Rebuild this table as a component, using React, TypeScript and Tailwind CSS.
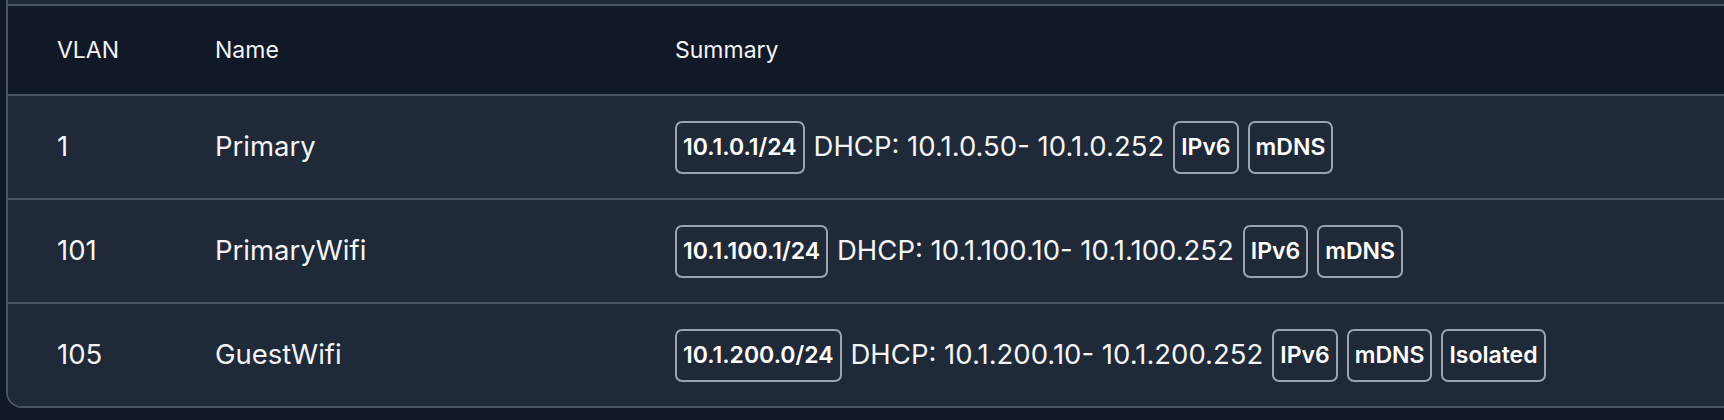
import React from "react";

type Row = { vlan: string; name: string; cidr: string; dhcp: string; tags: string[] };

const rows: Row[] = [
  { vlan: "1", name: "Primary", cidr: "10.1.0.1/24", dhcp: "DHCP: 10.1.0.50- 10.1.0.252", tags: ["IPv6", "mDNS"] },
  { vlan: "101", name: "PrimaryWifi", cidr: "10.1.100.1/24", dhcp: "DHCP: 10.1.100.10- 10.1.100.252", tags: ["IPv6", "mDNS"] },
  { vlan: "105", name: "GuestWifi", cidr: "10.1.200.0/24", dhcp: "DHCP: 10.1.200.10- 10.1.200.252", tags: ["IPv6", "mDNS", "Isolated"] },
];

function Badge({ children }: { children: React.ReactNode }) {
  return (
    <span className="inline-flex h-[53px] items-center rounded-[7px] border-2 border-[#9ca3af] px-[6px] text-[23px] font-semibold text-white">
      {children}
    </span>
  );
}

export default function App() {
  return (
    <div
      className="h-[420px] w-[1724px] overflow-hidden bg-[#111827] pl-[6px] text-[#f3f4f6]"
      style={{ fontFamily: "Inter, 'Noto Sans', sans-serif" }}
    >
      <div className="w-[1760px] overflow-hidden rounded-bl-[16px] border-b-2 border-l-2 border-[#4b5563]">
        <div className="h-[4px] bg-[#1f2937]" />
        <div className="grid h-[90px] grid-cols-[158px_460px_1fr] items-center border-t-2 border-[#4b5563] bg-[#111827] pl-[49px] text-[23px]">
          <div>VLAN</div>
          <div>Name</div>
          <div>Summary</div>
        </div>
        {rows.map((r) => (
          <div
            key={r.vlan}
            className="grid h-[104px] grid-cols-[158px_460px_1fr] items-center border-t-2 border-[#4b5563] bg-[#1f2937] pl-[49px] text-[27.5px]"
          >
            <div>{r.vlan}</div>
            <div>{r.name}</div>
            <div className="flex items-center gap-[9px]">
              <Badge>{r.cidr}</Badge>
              <span>{r.dhcp}</span>
              {r.tags.map((t) => (
                <Badge key={t}>{t}</Badge>
              ))}
            </div>
          </div>
        ))}
      </div>
    </div>
  );
}
